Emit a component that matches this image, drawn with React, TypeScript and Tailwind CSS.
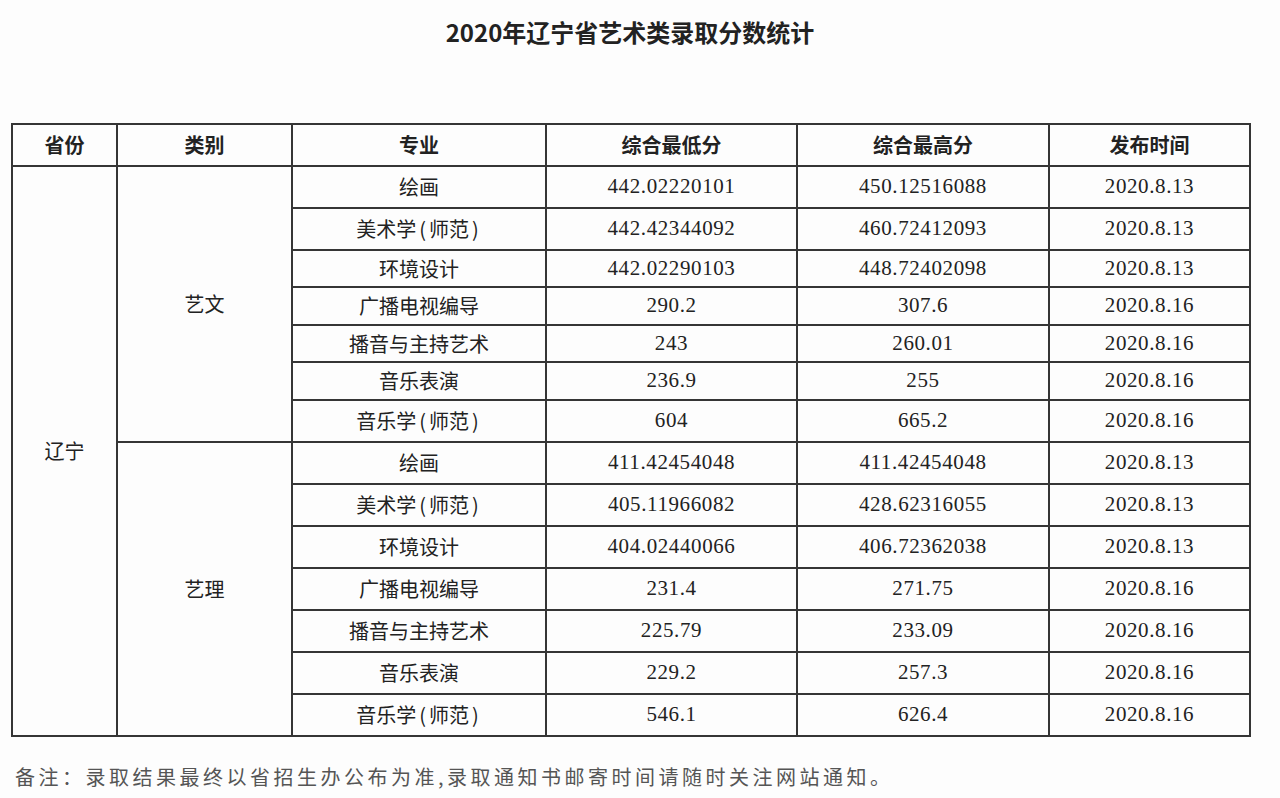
import React from 'react'

type Row = [string, string, string, string]

const groups: { name: string; rows: Row[]; heights: number[] }[] = [
  {
    name: '艺文',
    heights: [42, 42, 37, 38, 37, 38, 42],
    rows: [
      ['绘画', '442.02220101', '450.12516088', '2020.8.13'],
      ['美术学(师范)', '442.42344092', '460.72412093', '2020.8.13'],
      ['环境设计', '442.02290103', '448.72402098', '2020.8.13'],
      ['广播电视编导', '290.2', '307.6', '2020.8.16'],
      ['播音与主持艺术', '243', '260.01', '2020.8.16'],
      ['音乐表演', '236.9', '255', '2020.8.16'],
      ['音乐学(师范)', '604', '665.2', '2020.8.16'],
    ],
  },
  {
    name: '艺理',
    heights: [42, 42, 42, 42, 42, 42, 42],
    rows: [
      ['绘画', '411.42454048', '411.42454048', '2020.8.13'],
      ['美术学(师范)', '405.11966082', '428.62316055', '2020.8.13'],
      ['环境设计', '404.02440066', '406.72362038', '2020.8.13'],
      ['广播电视编导', '231.4', '271.75', '2020.8.16'],
      ['播音与主持艺术', '225.79', '233.09', '2020.8.16'],
      ['音乐表演', '229.2', '257.3', '2020.8.16'],
      ['音乐学(师范)', '546.1', '626.4', '2020.8.16'],
    ],
  },
]

const cjk = "font-['Noto_Sans_CJK_SC',sans-serif]"
const num = "font-['Liberation_Serif','Noto_Sans_CJK_SC',serif] text-[21px] tracking-[0.6px]"
const cell = 'border-2 border-[#353535] text-center align-middle p-0'

// 专业名里的半角括号在原图中略宽
function Major({ text }: { text: string }) {
  const parts = text.split(/([()])/)
  return (
    <>
      {parts.map((p, i) =>
        p === '(' || p === ')' ? (
          <span key={i} className="px-[3px]">
            {p}
          </span>
        ) : (
          <span key={i}>{p}</span>
        )
      )}
    </>
  )
}

export default function App() {
  return (
    <div className={`min-h-[798px] w-[1280px] bg-[#fdfdfd] text-[#222] ${cjk}`}>
      <h1 className="pt-[15px] pr-[20px] text-center text-[24px] font-bold leading-[34px] text-[#222]">
        2020年辽宁省艺术类录取分数统计
      </h1>

      <table className="mt-[74px] ml-[11px] w-[1238px] table-fixed border-collapse">
        <colgroup>
          <col className="w-[105px]" />
          <col className="w-[175px]" />
          <col className="w-[254px]" />
          <col className="w-[251px]" />
          <col className="w-[252px]" />
          <col className="w-[201px]" />
        </colgroup>
        <thead>
          <tr className="h-[42px] text-[20px] font-bold">
            <th className={cell}>省份</th>
            <th className={cell}>类别</th>
            <th className={cell}>专业</th>
            <th className={cell}>综合最低分</th>
            <th className={cell}>综合最高分</th>
            <th className={cell}>发布时间</th>
          </tr>
        </thead>
        <tbody className="text-[20px]">
          {groups.map((g, gi) =>
            g.rows.map((r, i) => (
              <tr key={g.name + i} style={{ height: g.heights[i] }}>
                {gi === 0 && i === 0 && (
                  <td rowSpan={14} className={`${cell} pb-[1px]`}>
                    辽宁
                  </td>
                )}
                {i === 0 && (
                  <td rowSpan={7} className={cell}>
                    {g.name}
                  </td>
                )}
                <td className={cell}>
                  <Major text={r[0]} />
                </td>
                <td className={`${cell} ${num}`}>{r[1]}</td>
                <td className={`${cell} ${num}`}>{r[2]}</td>
                <td className={`${cell} ${num}`}>{r[3]}</td>
              </tr>
            ))
          )}
        </tbody>
      </table>

      <p className="mt-[26px] pl-[15px] text-[20px] leading-[28px] tracking-[3.5px] text-[#555]">
        备注：录取结果最终以省招生办公布为准,录取通知书邮寄时间请随时关注网站通知。
      </p>
    </div>
  )
}
